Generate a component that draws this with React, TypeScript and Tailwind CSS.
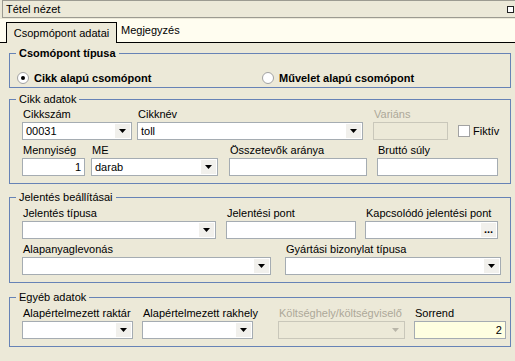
import React from "react"

function Arrow({ disabled }: { disabled?: boolean }) {
  return (
    <div className={`flex h-full w-[15px] items-center justify-center ${disabled ? "" : "bg-[#f1f0ec]"}`}>
      <svg width="7" height="4" viewBox="0 0 7 4">
        <path d="M0 0h7L3.5 4z" fill={disabled ? "#b8b5a8" : "#000"} />
      </svg>
    </div>
  )
}

function Combo({ w, value, disabled }: { w: string; value?: string; disabled?: boolean }) {
  return (
    <div
      className={`flex h-[18px] items-stretch border p-px ${w} ${
        disabled ? "border-[#c9c7ba] bg-[#ece9d8]" : "border-[#a5acb2] bg-white"
      }`}
    >
      <div className="flex-1 pl-[2px] leading-[14px] text-black">{value}</div>
      <Arrow disabled={disabled} />
    </div>
  )
}

function Input({ w, value, bg, disabled }: { w: string; value?: string; bg?: string; disabled?: boolean }) {
  return (
    <div
      className={`h-[18px] border pr-[3px] text-right leading-[16px] text-black ${w} ${
        disabled ? "border-[#c9c7ba] bg-[#ece9d8]" : `border-[#a5acb2] ${bg ?? "bg-white"}`
      }`}
    >
      {value}
    </div>
  )
}

function Label({ children, disabled }: { children: React.ReactNode; disabled?: boolean }) {
  return (
    <div className={`h-[15px] whitespace-nowrap pl-px leading-[15px] ${disabled ? "text-[#aca899]" : "text-black"}`}>
      {children}
    </div>
  )
}

function Radio({ checked, label }: { checked?: boolean; label: string }) {
  return (
    <div className="flex items-center gap-[5px]">
      <div className="flex h-[12px] w-[12px] items-center justify-center rounded-full border border-[#a2a2a2] bg-white">
        {checked && <div className="h-[4px] w-[4px] rounded-full bg-black" />}
      </div>
      <span className="font-bold text-black">{label}</span>
    </div>
  )
}

function Group({ title, bold, className, children }: { title: string; bold?: boolean; className: string; children: React.ReactNode }) {
  return (
    <fieldset className={`ml-[9px] w-[502px] border border-[#6783b6] ${className}`}>
      <legend className={`ml-[6px] px-[3px] leading-[13px] text-black ${bold ? "font-bold" : ""}`}>{title}</legend>
      {children}
    </fieldset>
  )
}

export default function App() {
  return (
    <div className="h-[361px] w-[515px] overflow-hidden bg-[#ece9d8] font-['Liberation_Sans',sans-serif] text-[11px]">
      {/* title bar */}
      <div className="ml-[2px] flex h-[18px] items-center justify-between border border-r-0 border-[#9c9b91] pl-[3px]">
        <span className="text-black">Tétel nézet</span>
        <div className="mr-px h-[7px] w-[7px] border border-[#222] bg-white" />
      </div>

      {/* tabs */}
      <div className="mt-px flex h-[24px] items-end border-b border-black bg-[#fffdf0] pl-[6px]">
        <div className="-mb-px flex h-[21px] w-[111px] items-center justify-center border border-b-0 border-black bg-[#ece9d8] text-black">
          Csopmópont adatai
        </div>
        <div className="pb-[4px] pl-[4px] text-black">Megjegyzés</div>
      </div>

      <Group title="Csomópont típusa" bold className="mt-[4px] h-[41px]">
        <div className="flex pt-[10px]">
          <div className="ml-[7px] w-[245px]">
            <Radio checked label="Cikk alapú csomópont" />
          </div>
          <Radio label="Művelet alapú csomópont" />
        </div>
      </Group>

      <Group title="Cikk adatok" className="mt-[5px] h-[91px]">
        <div className="ml-[12px] pt-[1px]">
          <div className="flex items-end">
            <div>
              <Label>Cikkszám</Label>
              <Combo w="w-[110px]" value="00031" />
            </div>
            <div className="ml-[5px]">
              <Label>Cikknév</Label>
              <Combo w="w-[226px]" value="toll" />
            </div>
            <div className="ml-[10px]">
              <Label disabled>Variáns</Label>
              <Input w="w-[75px]" disabled />
            </div>
            <div className="ml-[10px] flex h-[18px] items-center gap-[3px]">
              <div className="h-[12px] w-[12px] border border-[#a2a2a2] bg-white" />
              <span className="text-black">Fiktív</span>
            </div>
          </div>
          <div className="mt-[3px] flex">
            <div>
              <Label>Mennyiség</Label>
              <Input w="w-[63px]" value="1" />
            </div>
            <div className="ml-[6px]">
              <Label>ME</Label>
              <Combo w="w-[127px]" value="darab" />
            </div>
            <div className="ml-[11px]">
              <Label>Összetevők aránya</Label>
              <Input w="w-[138px]" />
            </div>
            <div className="ml-[10px]">
              <Label>Bruttó súly</Label>
              <Input w="w-[121px]" />
            </div>
          </div>
        </div>
      </Group>

      <Group title="Jelentés beállításai" className="mt-[7px] h-[92px]">
        <div className="ml-[12px] pt-[2px]">
          <div className="flex">
            <div>
              <Label>Jelentés típusa</Label>
              <Combo w="w-[194px]" />
            </div>
            <div className="ml-[10px]">
              <Label>Jelentési pont</Label>
              <Input w="w-[130px]" />
            </div>
            <div className="ml-[9px]">
              <Label>Kapcsolódó jelentési pont</Label>
              <div className="flex h-[18px] w-[133px] items-stretch justify-end border border-[#a5acb2] bg-white p-px">
                <div className="flex w-[15px] items-center justify-center bg-[#f1f0ec] pb-[2px] font-bold leading-none text-black">
                  ...
                </div>
              </div>
            </div>
          </div>
          <div className="mt-[3px] flex">
            <div>
              <Label>Alapanyaglevonás</Label>
              <Combo w="w-[249px]" />
            </div>
            <div className="ml-[14px]">
              <Label>Gyártási bizonylat típusa</Label>
              <Combo w="w-[216px]" />
            </div>
          </div>
        </div>
      </Group>

      <Group title="Egyéb adatok" className="mt-[8px] h-[56px]">
        <div className="ml-[12px] flex pt-[2px]">
          <div>
            <Label>Alapértelmezett raktár</Label>
            <Combo w="w-[111px]" />
          </div>
          <div className="ml-[9px]">
            <Label>Alapértelmezett rakhely</Label>
            <Combo w="w-[111px]" />
          </div>
          <div className="ml-[20px]">
            <Label disabled>Költséghely/költségviselő</Label>
            <Combo w="w-[127px]" disabled />
          </div>
          <div className="ml-[9px]">
            <Label>Sorrend</Label>
            <Input w="w-[92px]" value="2" bg="bg-[#ffffe1]" />
          </div>
        </div>
      </Group>
    </div>
  )
}
